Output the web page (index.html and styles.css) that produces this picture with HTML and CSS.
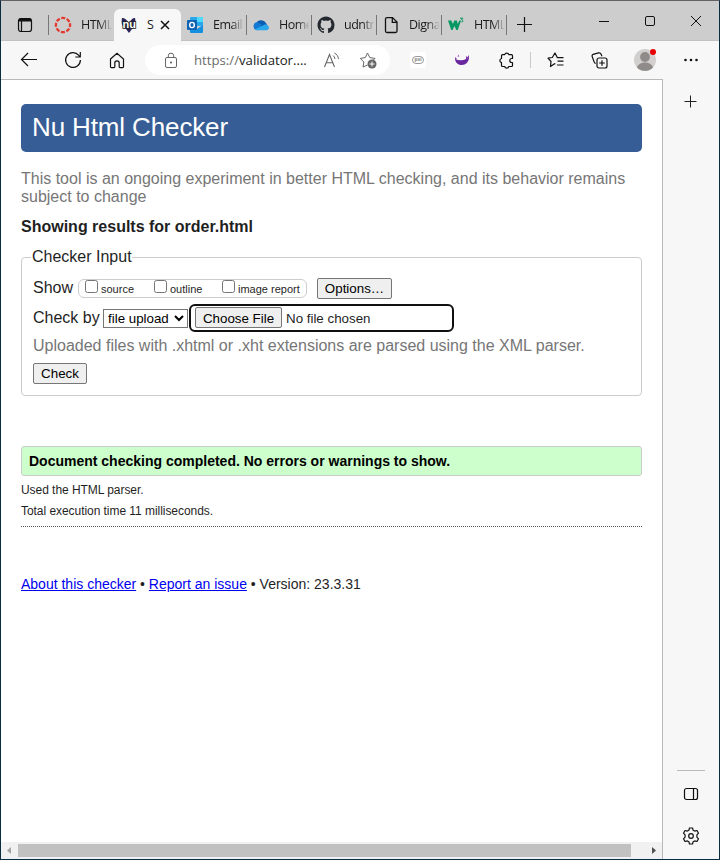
FILE: index.html
```html
<!DOCTYPE html>
<html lang="en">
<head>
<meta charset="utf-8">
<title>Showing results for order.html</title>
<link rel="stylesheet" href="styles.css">
</head>
<body>
<div class="window">
  <header class="tabbar">
    <div class="tab-actions">
      <svg width="16" height="16" viewBox="0 0 16 16" fill="none" stroke="#111"><rect x="1.500" y="1.500" width="13" height="13" rx="2.500" stroke-width="1.200"/><path d="M2 3h12" stroke-width="3"/><path d="M4.500 4v10" stroke-width="1.200"/></svg>
    </div>
    <div class="tab first">
      <svg width="18" height="18" viewBox="0 0 18 18" fill="none" stroke="#e43b31"><circle cx="9" cy="9" r="7.100" stroke-width="2.300" stroke-dasharray="4.050 1.530" stroke-dashoffset="2"/></svg>
      <span class="tab-title">HTML</span>
    </div>
    <div class="tab active">
      <svg width="18" height="18" viewBox="0 0 18 18"><path d="M2 2c3 0 5 2 7 5 2-3 3-5 6-5 1 5 1 9-3 11l-3 4-3-4C2 11 1 7 2 2z" fill="#292357"/><text class="nu-logo" x="2.500" y="12">nu</text></svg>
      <span class="tab-title">S</span>
      <svg class="tab-close" width="10" height="10" viewBox="0 0 10 10" stroke="#111" stroke-width="1.500"><path d="M1 1l8 8M9 1L1 9"/></svg>
    </div>
    <div class="tab">
      <svg width="18" height="18" viewBox="0 0 18 18"><path d="M5 1h11a1 1 0 0 1 1 1v8H4V2a1 1 0 0 1 1-1z" fill="#28a8ea"/><path d="M11 1h5a1 1 0 0 1 1 1v4h-6z" fill="#50d9ff"/><path d="M4 9l7 4 6-4v7a1 1 0 0 1-1 1H5a1 1 0 0 1-1-1z" fill="#1490df"/><rect x="1" y="4" width="10" height="10" rx="1" fill="#0f64b4"/><ellipse cx="6" cy="9" rx="2.300" ry="2.600" fill="none" stroke="#fff" stroke-width="1.400"/></svg>
      <span class="tab-title">Email</span>
    </div>
    <div class="tab">
      <svg width="18" height="18" viewBox="0 0 18 18"><path d="M4 8a5.500 5.500 0 0 1 10-1l2 4-7 2z" fill="#0a5cb2"/><path d="M5 14.300a4.200 4.200 0 0 1-.7-8.100C6 6 7 7 10 9l-4 5.300z" fill="#1478d4"/><path d="M3 13.300L10.500 9.700C13 7 17 9 17 11.500c0 1.600-1.200 2.800-2.800 2.800H5z" fill="#28a8ea"/></svg>
      <span class="tab-title">Home</span>
    </div>
    <div class="tab">
      <svg width="18" height="18" viewBox="-0.500 -0.500 17 17"><path fill="#24292f" d="M8 0C3.580 0 0 3.580 0 8c0 3.540 2.290 6.530 5.470 7.590.4.070.55-.17.55-.38 0-.19-.01-.82-.01-1.490-2.010.37-2.530-.49-2.690-.94-.09-.23-.48-.94-.82-1.130-.28-.15-.68-.52-.01-.53.63-.01 1.080.58 1.230.82.72 1.210 1.870.87 2.330.66.07-.52.28-.87.51-1.070-1.780-.2-3.640-.89-3.640-3.950 0-.87.31-1.590.82-2.150-.08-.2-.36-1.020.08-2.120 0 0 .67-.21 2.200.82a7.600 7.600 0 0 1 4 0c1.530-1.040 2.200-.82 2.200-.82.44 1.100.16 1.920.08 2.120.51.56.82 1.270.82 2.150 0 3.070-1.870 3.750-3.650 3.950.29.25.54.73.54 1.480 0 1.070-.01 1.930-.01 2.200 0 .21.15.46.55.38A8.010 8.010 0 0 0 16 8c0-4.420-3.580-8-8-8z"/></svg>
      <span class="tab-title">udntr</span>
    </div>
    <div class="tab">
      <svg width="18" height="18" viewBox="0 0 18 18" fill="none" stroke="#111" stroke-width="1.300"><path d="M5 1.600h5.500L15 6v9a1.500 1.500 0 0 1-1.500 1.500H5A1.500 1.500 0 0 1 3.500 15V3A1.500 1.500 0 0 1 5 1.600zM10.300 2v4.300h4.500"/></svg>
      <span class="tab-title">Digna</span>
    </div>
    <div class="tab">
      <svg width="18" height="18" viewBox="0 0 18 18" fill="none" stroke="#059862"><path d="M1 4.500h3.300L6 8l1.300-3.500h2.500l1 3.500 1.500-3.500h1.700L10.800 14H9.300L7.500 10l-2 4H4.200z" fill="#059862" stroke="none"/><path d="M13 2.200h3l-1.500 1.600c2 .2 1.700 2.500-.1 2.300" stroke-width="1"/></svg>
      <span class="tab-title">HTML</span>
    </div>
    <svg class="new-tab" width="15" height="15" viewBox="0 0 15 15" stroke="#111" stroke-width="1.200"><path d="M7.500 0v15M0 7.500h15"/></svg>
    <div class="caption">
      <svg width="12" height="12" viewBox="0 0 12 12" fill="none" stroke="#111"><path d="M1 6.500h10"/></svg>
      <svg width="12" height="12" viewBox="0 0 12 12" fill="none" stroke="#111"><rect x="1.500" y="1.500" width="9" height="9" rx="1.500"/></svg>
      <svg width="12" height="12" viewBox="0 0 12 12" fill="none" stroke="#111"><path d="M1 1l10 10M11 1L1 11"/></svg>
    </div>
  </header>

  <div class="toolbar">
    <div class="tool"><svg width="18" height="16" viewBox="0 0 18 16" fill="none" stroke="#111" stroke-width="1.200"><path d="M8 1L1.500 7.500 8 14M1.500 7.500H17"/></svg></div>
    <div class="tool"><svg width="18" height="18" viewBox="0 0 18 18" fill="none" stroke="#111" stroke-width="1.200"><path d="M16.400 9A7.400 7.400 0 1 1 14.800 4.400L16.200 6M16.300 1v5h-5"/></svg></div>
    <div class="tool"><svg width="16" height="17" viewBox="0 0 16 17" fill="none" stroke="#111" stroke-width="1.200"><path d="M1.500 7L8 1.200 14.500 7v7.800a.8.800 0 0 1-.8.800H11a.8.800 0 0 1-.8-.8V11a2.200 2.200 0 0 0-4.400 0v3.800a.8.800 0 0 1-.8.800H2.300a.8.800 0 0 1-.8-.8z"/></svg></div>
    <div class="address">
      <svg width="14" height="17" viewBox="0 0 14 17" fill="none" stroke="#666"><rect x="1.500" y="5.500" width="11" height="10" rx="1.500"/><path d="M4.300 5.500V3.800a2.700 2.700 0 0 1 5.400 0v1.700"/><circle cx="7" cy="10.500" r="1" fill="#555" stroke="none"/></svg>
      <span class="url">https://<b>validator....</b></span>
      <svg class="read" width="18" height="17" viewBox="0 0 18 17" fill="none" stroke="#666"><path d="M1.500 15L6.500 2.500l5 12.500M3.200 10.800h6.600" stroke-width="1.100"/><path d="M10 3.500a5 5 0 0 1 2 3.500M11.500 1c2.500 1.300 3.700 3.500 4 6"/></svg>
      <svg class="star" width="18" height="18" viewBox="0 0 18 18" fill="none" stroke="#666"><path d="M8.500 14L4 16l.9-5L1.300 7.400l5-.8L8.500 2l2.300 4.600 5.200.8-2 2" stroke-linejoin="round"/><circle cx="13" cy="13" r="4.500" fill="#666" stroke="none"/><path d="M13 10.500v5M10.500 13h5" stroke="#fff"/></svg>
    </div>
    <div class="tool"><span class="psi"><span>psi</span></span></div>
    <div class="tool"><svg width="16" height="12" viewBox="0 0 16 12"><path d="M1 5q7 3 14-1.500C15 8 11.500 11 8 11S1.500 9 1 5z" fill="#6a269c"/><path d="M1 6V3l2 2zM12 5V2l1.300 1.200L15 1v4z" fill="#813bae"/><path d="M4 .5l1.500 1.800L3.700 3z" fill="#a65ac6"/></svg></div>
    <div class="tool"><svg width="17" height="17" viewBox="0 0 17 17" fill="none" stroke="#111" stroke-width="1.200"><path d="M4.500 2.700h2.200a2.100 2.100 0 0 1 4.100 0h2.700a1 1 0 0 1 1 1v2.800h-.7a2 2 0 0 0 0 4h.7v3a1 1 0 0 1-1 1h-2.700a2.100 2.100 0 0 1-4.100 0H4.500a1 1 0 0 1-1-1v-2.900a2.100 2.100 0 0 1 0-4.100V3.700a1 1 0 0 1 1-1z" stroke-linejoin="round"/></svg></div>
    <i class="divider"></i>
    <div class="tool"><svg width="17" height="16" viewBox="0 0 17 16" fill="none" stroke="#111" stroke-width="1.200"><path d="M8.500 12l-1-.3-4 2.800.5-5L1 6.200l4.300-.7L8 1l2.300 4.600h6.200M10.500 9.200h6M10 13h6.500" stroke-linejoin="round"/></svg></div>
    <div class="tool"><svg width="17" height="17" viewBox="0 0 17 17" fill="none" stroke="#111" stroke-width="1.200"><rect x="6" y="6" width="10" height="10" rx="2"/><path d="M11 8.200v5.600M8.200 11h5.600M4.700 11.500c-1-.4-1.500-1.200-1.800-2.200L1.200 4.600c-.4-1.300 0-1.900 1-2.300L7.500.9c1.300-.3 2.200.3 2.700 1.500l.7 1.800"/></svg></div>
    <div class="tool wide"><span class="avatar"><svg width="22" height="22" viewBox="0 0 22 22"><circle cx="11" cy="11" r="11" fill="#d2d0ce"/><circle cx="11" cy="8" r="4.900" fill="#8e8b88"/><path d="M3 18.400c2-6.500 14-6.500 16 0a11 11 0 0 1-16 0z" fill="#8e8b88"/></svg><i class="dot"></i></span></div>
    <div class="tool"><svg width="14" height="4" viewBox="0 0 14 4" fill="#111"><circle cx="1.500" cy="2" r="1.300"/><circle cx="7" cy="2" r="1.300"/><circle cx="12.500" cy="2" r="1.300"/></svg></div>
  </div>

  <div class="content">
    <div class="viewport">
      <main class="page">
        <h1>Nu Html Checker</h1>
        <p class="notice">This tool is an ongoing experiment in better HTML checking, and its behavior remains subject to change</p>
        <h2>Showing results for order.html</h2>
        <fieldset>
          <legend>Checker Input</legend>
          <div class="row show-row">
            <span class="label">Show</span>
            <span class="choices">
              <label class="c1"><input type="checkbox">source</label>
              <label class="c2"><input type="checkbox">outline</label>
              <label><input type="checkbox">image report</label>
            </span>
            <button class="options">Options…</button>
          </div>
          <div class="row by-row">
            <span class="label">Check by</span>
            <select><option>file upload</option></select>
            <input class="file" type="file">
          </div>
          <p class="hint">Uploaded files with .xhtml or .xht extensions are parsed using the XML parser.</p>
          <button class="check">Check</button>
        </fieldset>
        <p class="success">Document checking completed. No errors or warnings to show.</p>
        <p class="detail">Used the HTML parser.</p>
        <p class="detail">Total execution time 11 milliseconds.</p>
        <hr>
        <p class="about"><a href="#">About this checker</a> • <a href="#">Report an issue</a> • Version: 23.3.31</p>
      </main>
      <div class="scrollbar">
        <svg width="17" height="17" viewBox="0 0 17 17"><path d="M10 5v7L6 8.500z" fill="#a3a3a3"/></svg>
        <i class="thumb"></i>
        <svg width="17" height="17" viewBox="0 0 17 17"><path d="M7 5v7l4-3.500z" fill="#505050"/></svg>
      </div>
    </div>
    <aside class="sidebar">
      <svg class="side-add" width="13" height="13" viewBox="0 0 13 13" stroke="#222"><path d="M6.500 .5v12M.5 6.500h12"/></svg>
      <div class="side-bottom">
        <svg width="16" height="14" viewBox="0 0 16 14" fill="none" stroke="#111" stroke-width="1.200"><rect x="1.500" y="1.500" width="13" height="11" rx="2"/><path d="M10.500 1.500v11"/></svg>
        <svg width="18" height="18" viewBox="0 0 18 18" fill="none" stroke="#111" stroke-width="1.200" stroke-linejoin="round"><path d="M7.500 1h3l.6 2.200 1.600.9 2.300-.6 1.500 2.700-1.600 1.700v2.200l1.600 1.700-1.500 2.700-2.300-.6-1.600.9-.6 2.200h-3l-.6-2.200-1.600-.9-2.300.6-1.500-2.700 1.600-1.700V7.900L1.500 6.200 3 3.500l2.300.6 1.600-.9z"/><circle cx="9" cy="9" r="2.300"/></svg>
      </div>
    </aside>
  </div>
</div>
</body>
</html>
```
FILE: styles.css
```css
* { box-sizing: border-box; }
body {
  margin: 0;
  font-family: "Liberation Sans", Arial, sans-serif;
  color: #1f1f1f;
}
svg { display: block; flex: none; }
p, h1, h2 { margin: 0; }

.window {
  width: 720px;
  height: 860px;
  display: flex;
  flex-direction: column;
  border: 1px solid #0b2c40;
  border-top-color: #646064;
  background: #f7f7f7;
}

/* Tabs */
.tabbar {
  height: 40px;
  flex: none;
  display: flex;
  align-items: flex-end;
  background: #cdcdcd;
  border-bottom: 1px solid #c2c2c2;
  font: 12.5px "Open Sans", "Noto Sans", sans-serif;
  color: #1b1b1b;
}
.tab-actions {
  width: 48px;
  height: 20px;
  margin-bottom: 5px;
  display: flex;
  align-items: center;
  padding-left: 16px;
  border-right: 1px solid #777;
}
.tab {
  width: 65px;
  height: 20px;
  margin-bottom: 5px;
  display: flex;
  align-items: center;
  padding-left: 5px;
  border-right: 1px solid #777;
}
.tab.first { border-right: 0; }
.tab.active {
  width: 67px;
  height: 32px;
  margin: 0 0 -1px;
  padding: 0 0 0 6px;
  border: 0;
  border-radius: 6px 6px 0 0;
  background: #f7f7f7;
}
.active + .tab { width: 66px; }
.tab-title {
  width: 31px;
  margin-left: 9px;
  overflow: hidden;
  white-space: nowrap;
  line-height: 18px;
  letter-spacing: -0.5px;
  -webkit-mask-image: linear-gradient(90deg, #000 60%, transparent);
  mask-image: linear-gradient(90deg, #000 60%, transparent);
}
.active .tab-title { width: 8px; -webkit-mask-image: none; mask-image: none; }
.tab-close { margin-left: 5px; }
.nu-logo {
  font: bold 11px "Liberation Sans", sans-serif;
  fill: #fff;
  stroke: #222;
  stroke-width: 1.6px;
  paint-order: stroke;
}
.new-tab { margin: 0 0 8px 10px; }
.caption {
  display: flex;
  gap: 34px;
  margin-left: auto;
  padding-right: 17px;
  height: 25px;
}

/* Toolbar */
.toolbar {
  height: 38px;
  flex: none;
  display: flex;
  align-items: center;
  padding-left: 6px;
}
.tool {
  width: 44px;
  flex: none;
  display: flex;
  justify-content: center;
}
.tool.wide { width: 48px; }
.address {
  width: 245px;
  height: 30px;
  flex: none;
  margin: 0 6px;
  padding-left: 19px;
  display: flex;
  align-items: center;
  border-radius: 15px;
  background: #fff;
}
.url {
  width: 114px;
  margin-left: 16px;
  font: 13.2px "Open Sans", "Noto Sans", sans-serif;
  color: #6b6b6b;
  white-space: nowrap;
}
.url b { font-weight: 400; color: #1b1b1b; }
.read { margin-left: 15px; }
.star { margin-left: 18px; }
.psi {
  width: 16px;
  height: 16px;
  display: flex;
  align-items: center;
  justify-content: center;
  background: #fff;
  border-radius: 2px;
}
.psi span {
  width: 12px;
  height: 8px;
  border: 1px solid #999;
  border-radius: 4px;
  font: bold 5px/5px "Liberation Sans", sans-serif;
  text-align: center;
  color: #777;
}
.divider { width: 1px; height: 16px; margin: 0 2px; background: #c8c8c8; }
.avatar { position: relative; }
.dot {
  position: absolute;
  top: 0;
  right: 0;
  width: 6px;
  height: 6px;
  border-radius: 50%;
  background: #e60000;
}

/* Page area */
.content { flex: 1; display: flex; min-height: 0; }
.viewport {
  width: 662px;
  display: flex;
  flex-direction: column;
  border-top: 1px solid #b9b9b9;
  border-right: 1px solid #b9b9b9;
  background: #fff;
}
.page { flex: 1; padding: 24px 20px 0; }
h1 {
  height: 48px;
  padding-left: 11px;
  border-radius: 5px;
  background: #365d95;
  color: #fff;
  font-size: 26px;
  font-weight: 400;
  line-height: 46px;
  letter-spacing: -0.13px;
}
.notice {
  margin-top: 18px;
  font-size: 16px;
  line-height: 18px;
  color: #767676;
}
h2 {
  margin-top: 11px;
  font-size: 16px;
  line-height: 20px;
}
fieldset {
  height: 148px;
  margin: 11px 0 0;
  padding: 0 10px 0 11px;
  border: 1px solid #ccc;
  border-radius: 4px;
  min-width: 0;
}
legend {
  margin-left: -2px;
  padding: 0 0 0 1px;
  font-size: 16px;
  line-height: 18px;
}
.row { display: flex; }
.label { font-size: 16px; line-height: 18px; white-space: nowrap; }
.show-row { margin-top: 12px; height: 26px; }
.show-row .label { width: 45px; margin-top: 1px; }
.choices {
  width: 229px;
  height: 19px;
  margin-top: 1px;
  padding-left: 6px;
  display: flex;
  align-items: flex-start;
  border: 1px solid #ccc;
  border-radius: 6px;
  font-size: 11px;
  line-height: 19px;
}
.choices label { display: flex; white-space: nowrap; }
.choices input { width: 13px; height: 13px; margin: 0 3px 0 0; }
.c1 { width: 69px; }
.c2 { width: 68px; }
button, select, .file {
  margin: 0;
  font-family: "Liberation Sans", Arial, sans-serif;
  font-size: 13.333px;
}
button {
  height: 21px;
  padding: 0;
  border: 1px solid #767676;
  border-radius: 2px;
  background: #efefef;
  color: #000;
}
.options { width: 75px; margin-left: 10px; }
.by-row { height: 32px; }
.by-row .label { width: 70px; margin-top: 5px; }
select {
  width: 85px;
  height: 19px;
  margin-top: 5px;
  padding: 0;
  border: 1px solid #767676;
  border-radius: 0;
  background: #fff;
  color: #000;
}
.file {
  width: 261px;
  height: 24px;
  margin: 2px 0 0 3px;
  padding: 1px 3px 0 4px;
  border-radius: 4px;
  outline: 2px solid #101010;
  line-height: 21px;
}
.file::file-selector-button {
  width: 87px;
  height: 21px;
  margin: 0 4px 0 0;
  padding: 0;
  border: 1px solid #767676;
  border-radius: 2px;
  background: #efefef;
  color: #000;
  font: inherit;
}
.hint {
  margin: 1px 0 8px;
  font-size: 16px;
  line-height: 18px;
  color: #767676;
}
.check { display: block; width: 54px; }
.success {
  height: 30px;
  margin-top: 50px;
  padding-left: 7px;
  border: 1px solid #ccc;
  border-radius: 3px;
  background: #cfc;
  color: #000;
  font-size: 14px;
  font-weight: 700;
  line-height: 28px;
}
.detail { font-size: 12px; line-height: 15px; margin-top: 6px; letter-spacing: -0.05px; }
.success + .detail { margin-top: 7px; }
hr { margin: 7px 0 0; border: 0; border-top: 1px dotted #555; }
.about { margin-top: 49px; font-size: 14px; line-height: 16px; }
.about a { color: #00e; }
.scrollbar { height: 17px; display: flex; align-items: center; background: #f1f1f1; }
.thumb { width: 613px; height: 13px; background: #c1c1c1; }
.scrollbar svg:last-child { margin-left: auto; }

/* Sidebar */
.sidebar {
  flex: 1;
  display: flex;
  flex-direction: column;
  align-items: center;
  justify-content: space-between;
  padding: 16px 0 14px;
}
.side-add { margin-right: 1px; }
.side-bottom {
  width: 28px;
  display: flex;
  flex-direction: column;
  align-items: center;
  gap: 26px;
  padding-top: 16px;
  border-top: 1px solid #bbb;
}
```
